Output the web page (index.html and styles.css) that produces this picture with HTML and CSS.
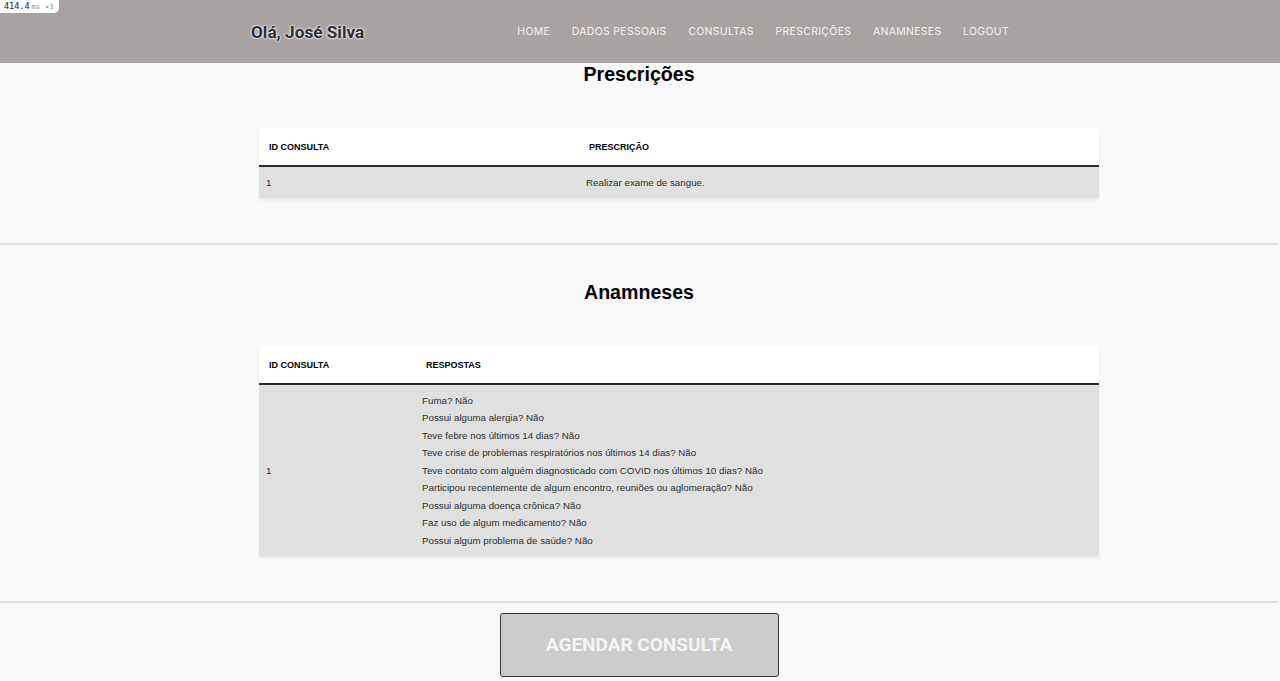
FILE: index.html
```html
<!DOCTYPE html>
<html lang="pt-BR">
<head>
<meta charset="utf-8">
<title>Paciente</title>
<link rel="stylesheet" href="styles.css">
</head>
<body>
<div class="perf-badge"><b>414.4</b><span class="unit">ms</span><span class="mult">×3</span></div>
<header class="topbar">
  <div class="topbar-inner">
    <div class="greeting">Olá, José Silva</div>
    <nav class="nav">
      <a href="#">HOME</a>
      <a href="#">DADOS PESSOAIS</a>
      <a href="#">CONSULTAS</a>
      <a href="#">PRESCRIÇÕES</a>
      <a href="#">ANAMNESES</a>
      <a href="#">LOGOUT</a>
    </nav>
  </div>
</header>
<main>
  <section class="block block-first">
    <h2 class="title">Prescrições</h2>
    <div class="table-wrap">
      <table class="data">
        <thead>
          <tr><th class="col-id1">ID CONSULTA</th><th>PRESCRIÇÃO</th></tr>
        </thead>
        <tbody>
          <tr><td>1</td><td>Realizar exame de sangue.</td></tr>
        </tbody>
      </table>
    </div>
  </section>
  <section class="block">
    <h2 class="title">Anamneses</h2>
    <div class="table-wrap">
      <table class="data">
        <thead>
          <tr><th class="col-id2">ID CONSULTA</th><th>RESPOSTAS</th></tr>
        </thead>
        <tbody>
          <tr>
            <td class="mid">1</td>
            <td class="answers">
              <p>Fuma? Não</p>
              <p>Possui alguma alergia? Não</p>
              <p>Teve febre nos últimos 14 dias? Não</p>
              <p>Teve crise de problemas respiratórios nos últimos 14 dias? Não</p>
              <p>Teve contato com alguém diagnosticado com COVID nos últimos 10 dias? Não</p>
              <p>Participou recentemente de algum encontro, reuniões ou aglomeração? Não</p>
              <p>Possui alguma doença crônica? Não</p>
              <p>Faz uso de algum medicamento? Não</p>
              <p>Possui algum problema de saúde? Não</p>
            </td>
          </tr>
        </tbody>
      </table>
    </div>
  </section>
  <div class="actions">
    <button class="btn-agendar">AGENDAR CONSULTA</button>
  </div>
</main>
</body>
</html>
```
FILE: styles.css
```css
html, body {
  margin: 0;
  padding: 0;
}
body {
  background: #f9f9f9;
  font-family: "Liberation Sans", Arial, sans-serif;
  height: 681px;
  overflow: hidden;
}
.perf-badge {
  position: absolute;
  top: 0;
  left: 0;
  height: 13px;
  padding: 0 6px 0 4px;
  background: #fff;
  border-bottom-right-radius: 5px;
  font-family: "DejaVu Sans Mono", monospace;
  font-size: 8.5px;
  line-height: 13px;
  color: #333;
  z-index: 10;
}
.perf-badge b { font-weight: normal; color: #222; }
.perf-badge .unit { color: #888; margin-left: 2px; font-size: 7px; }
.perf-badge .mult { color: #888; margin-left: 5px; font-size: 7px; }

.topbar {
  height: 63px;
  background: #a8a2a2;
}
.topbar-inner {
  width: 758px;
  margin-left: calc(50% - 389px);
  height: 63px;
  display: flex;
  align-items: center;
  justify-content: space-between;
}
.greeting {
  font-family: Roboto, sans-serif;
  font-weight: 700;
  font-size: 17.2px;
  color: #2e2d33;
  text-shadow: 0 0 3px #fff, 0 0 2px #fff;
}
.nav {
  display: flex;
  gap: 21.6px;
}
.nav a {
  font-family: Inter, Roboto, sans-serif;
  font-size: 10.5px;
  letter-spacing: 0.3px;
  color: #f3f3f3;
  text-decoration: none;
}

.block {
  border-bottom: 2px solid #e2e2e2;
  padding: 36px 0 45px;
  margin-right: 2px;
}
.block-first {
  padding-top: 0;
}
.title {
  margin: 0 0 43px;
  text-align: center;
  font-size: 19.6px;
  line-height: 22px;
  font-weight: 700;
  color: #000;
}
.table-wrap {
  width: 840px;
  margin-left: calc(50% - 380px);
}
.data {
  width: 840px;
  border-collapse: collapse;
  box-shadow: 0 2px 3px rgba(0,0,0,0.07);
}
.data thead tr {
  background: #fff;
}
.data th {
  text-align: left;
  font-size: 9px;
  font-weight: 700;
  color: #000;
  height: 38px;
  padding: 0 10px;
  border-bottom: 2px solid #2a2a2a;
  box-sizing: border-box;
}
.col-id1 { width: 320px; }
.col-id2 { width: 157px; }
.data tbody tr {
  background: #e0e0e0;
}
.data td {
  font-size: 9.75px;
  color: #2e2e2e;
  height: 31px;
  padding: 0 7px;
  vertical-align: middle;
}
.answers {
  padding: 6.5px 6px 6.5px !important;
}
.answers p {
  margin: 0;
  line-height: 17.5px;
}
.actions {
  display: flex;
  justify-content: center;
  padding-top: 10px;
  margin-right: 2px;
}
.btn-agendar {
  width: 279px;
  height: 64px;
  background: #cccccc;
  border: 1px solid #333;
  border-radius: 3px;
  font-family: Roboto, sans-serif;
  font-weight: 700;
  font-size: 19px;
  color: #f4f4f4;
  cursor: pointer;
}
```
